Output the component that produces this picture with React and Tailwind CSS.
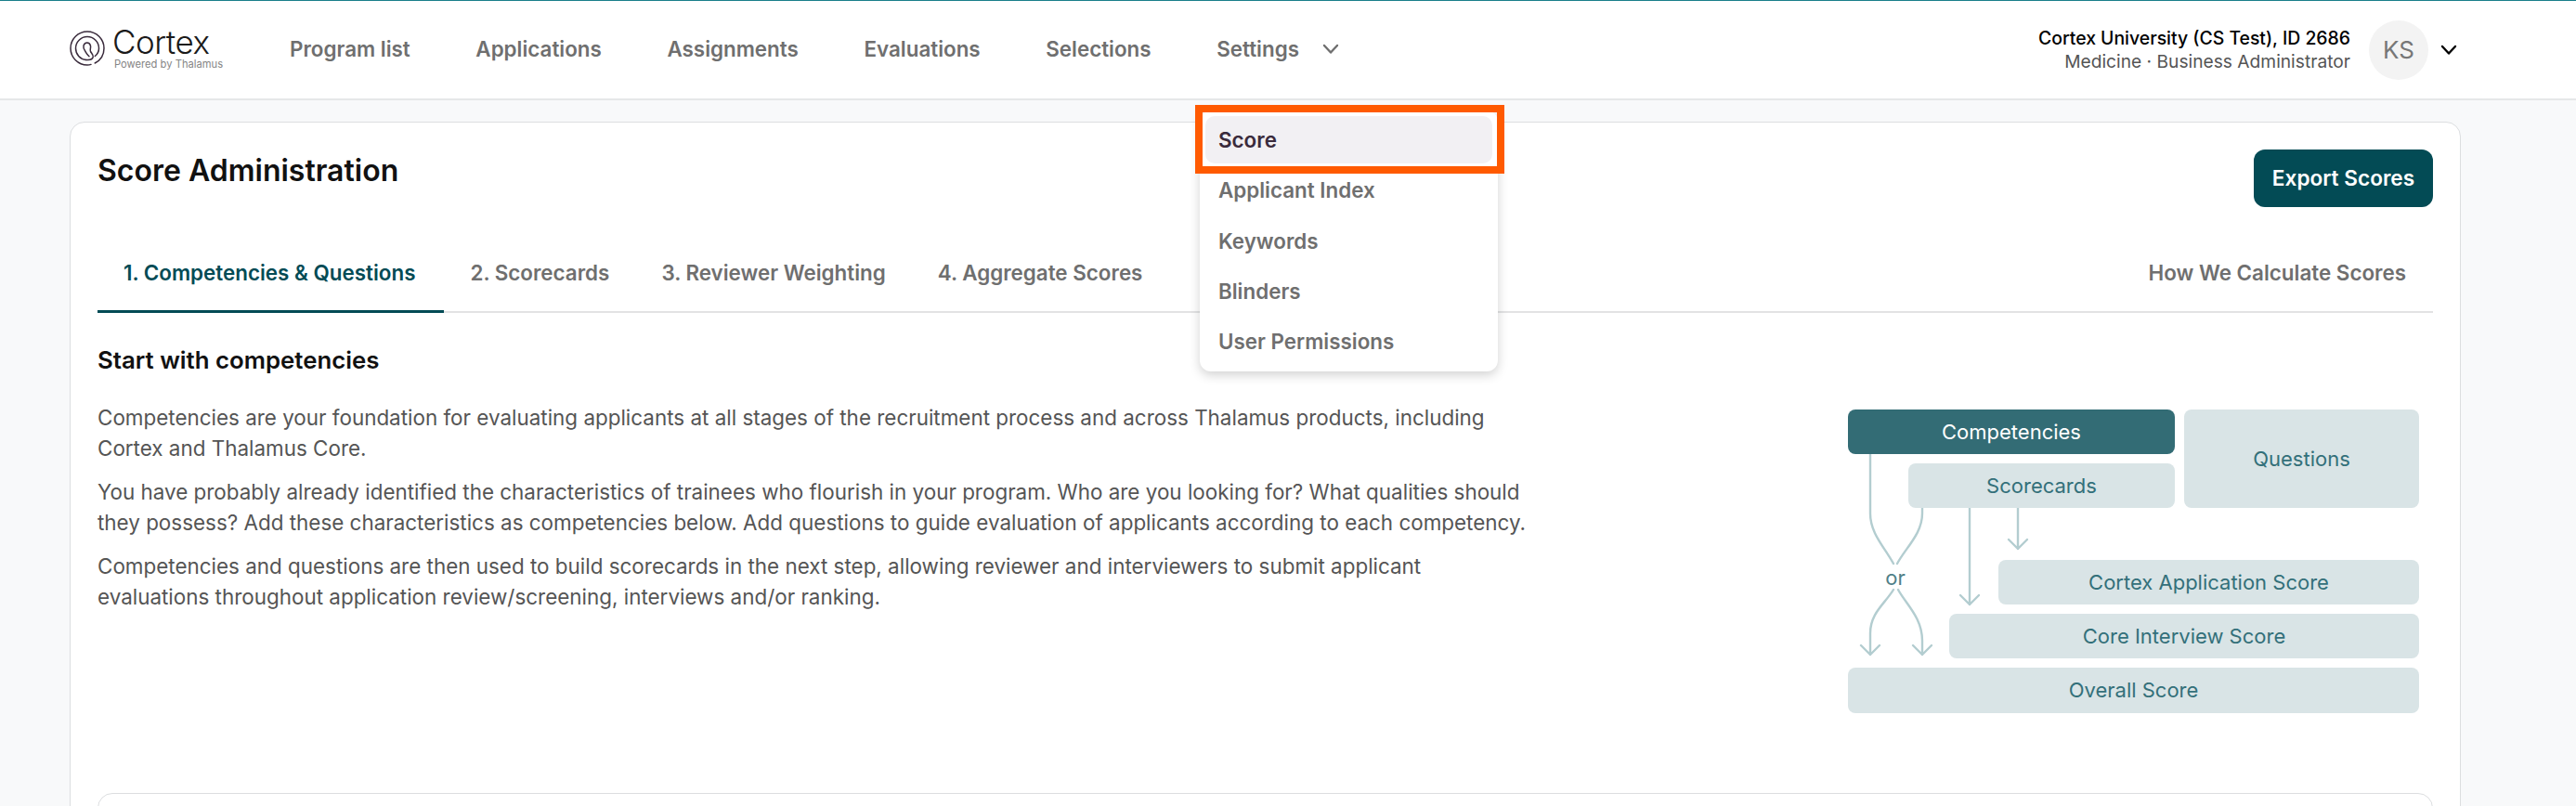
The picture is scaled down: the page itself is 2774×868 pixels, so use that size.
import React from 'react';

const navItems = ['Program list', 'Applications', 'Assignments', 'Evaluations', 'Selections'];
const tabs = ['2. Scorecards', '3. Reviewer Weighting', '4. Aggregate Scores'];
const menuItems = ['Applicant Index', 'Keywords', 'Blinders', 'User Permissions'];

const Chevron = ({ className }) => (
  <svg className={className} viewBox="0 0 18 12" fill="none" stroke="currentColor" strokeWidth="2.4" strokeLinecap="round" strokeLinejoin="round">
    <path d="M2 2l7 7.5L16 2" />
  </svg>
);

const Logo = () => (
  <svg className="w-[38px] h-[38px] shrink-0" viewBox="0 0 38 38" fill="none" stroke="#3a2b3c" strokeWidth="1.5" strokeLinecap="round">
    <path d="M23 36.4C21.8 36.8 20.4 37 19 37C9.1 37 1 28.9 1 19S9.1 1 19 1s18 8.1 18 18c0 7-4 13-9.800 16" />
    <path d="M27.300 27.500C30 25.300 31.500 22.300 31.500 19c0-6.900-5.600-12.500-12.500-12.500S6.500 12.100 6.500 19c0 6.500 4.800 11.800 11.200 12.400" />
    <path d="M17.700 31.400C21 31.800 24.500 31 25.200 28.500C25.800 26.300 23.700 24.500 22.500 22.500C21.500 20.800 23 18.500 22.500 16.300C22 14 20.400 13 18.800 13C17 13 15.500 14.300 15 16.300C14.400 18.800 15.800 20.500 17 22.500C18.200 24.500 19 26 21 27.800" />
  </svg>
);

const Box = ({ x, y, w, h, label, dark }) => (
  <g>
    <rect x={x} y={y} width={w} height={h} rx="8" fill={dark ? '#336c75' : '#d9e4e6'} />
    <text x={x + w / 2} y={y + h / 2 + 7.5} textAnchor="middle" fontSize="22" fill={dark ? '#ffffff' : '#33707a'}>
      {label}
    </text>
  </g>
);

const Diagram = () => (
  <svg className="w-[617px] h-[330px] shrink-0 mt-[104px] mr-[13px]" viewBox="1990 441 617 330" fill="none">
    <g stroke="#b3cdd0" strokeWidth="2.4" strokeLinecap="round" strokeLinejoin="round">
      <path d="M2014 489V553C2014 575 2030 590 2039 607" />
      <path d="M2070 547V553C2070 575 2052 590 2043 607" />
      <path d="M2039 635C2030 650 2014 660 2014 682V705M2004 695L2014 705L2024 695" />
      <path d="M2044 635C2052 650 2070 665 2070 690V705M2060 695L2070 705L2080 695" />
      <path d="M2121 547V651M2111 641L2121 651L2131 641" />
      <path d="M2173 547V591M2163 581L2173 591L2183 581" />
    </g>
    <Box x={1990} y={441} w={352} h={48} label="Competencies" dark />
    <Box x={2055} y={499} w={287} h={48} label="Scorecards" />
    <Box x={2352} y={441} w={253} h={106} label="Questions" />
    <Box x={2152} y={603} w={453} h={48} label="Cortex Application Score" />
    <Box x={2099} y={661} w={506} h={48} label="Core Interview Score" />
    <Box x={1990} y={719} w={615} h={49} label="Overall Score" />
    <text x="2041" y="630" textAnchor="middle" fontSize="22" fill="#4f8088">or</text>
  </svg>
);

const SettingsMenu = () => (
  <div className="absolute top-[119px] left-[1292px] w-[321px] h-[281px] bg-white rounded-[12px] shadow-[0_4px_12px_rgba(0,0,0,0.18)] pt-[6px] px-[6px] z-10">
    <div className="h-[51px] rounded-[10px] bg-[#f2f0f3] flex items-center pl-[14px] pt-[1px] text-[22.400px] font-semibold text-[#3a2b3c]">Score</div>
    {menuItems.map((item) => (
      <div key={item} className="h-[54.300px] flex items-center pl-[14px] text-[22.400px] font-semibold text-[#6f6f6f] translate-y-[2px]">
        {item}
      </div>
    ))}
  </div>
);

export default function App() {
  return (
    <div className="relative h-[868px] overflow-hidden bg-[#f8f9fa] font-['Inter',sans-serif]">
      <header className="h-[108px] bg-white border-t-[1px] border-b-[2px] border-t-[#1a7f8a] border-b-[#e6e7e8] flex items-center pl-[75px] pr-[128px]">
        <div className="flex items-center gap-[8px] w-[237px] -mt-[3px]">
          <Logo />
          <div className="flex flex-col">
            <span className="text-[35px] leading-[34px] font-light tracking-[-0.5px] text-[#1a1a1a]">Cortex</span>
            <span className="text-[11.200px] leading-[14px] pl-[2px] text-[#858585]">Powered by Thalamus</span>
          </div>
        </div>
        <nav className="flex items-center gap-[70.600px] text-[22.400px] font-semibold text-[#6f6f6f] -mt-[1px]">
          {navItems.map((item) => (
            <span key={item}>{item}</span>
          ))}
          <span className="flex items-center gap-[25px]">
            Settings
            <Chevron className="w-[18px] h-[12px]" />
          </span>
        </nav>
        <div className="ml-auto flex items-center">
          <div className="text-right leading-[25px]">
            <div className="text-[19.400px] font-medium text-black">Cortex University (CS Test), ID 2686</div>
            <div className="text-[19.200px] text-[#555555]">Medicine · Business Administrator</div>
          </div>
          <div className="ml-[20px] w-[64px] h-[64px] rounded-full bg-[#f3f3f3] flex items-center justify-center text-[26px] text-[#777777]">KS</div>
          <Chevron className="ml-[13px] w-[18px] h-[12px] text-black" />
        </div>
      </header>

      <SettingsMenu />
      <div className="absolute top-[113px] left-[1287px] w-[333px] h-[74px] border-[8px] border-[#ff5a00] z-20" />

      <main className="pl-[75px] pr-[124px] pt-[23px]">
        <div className="bg-white border border-[#dcdee0] rounded-[16px] px-[29px] pt-[28px] h-[800px]">
          <div className="flex items-start justify-between">
            <h1 className="text-[32px] leading-[48px] font-semibold text-[#111111]">Score Administration</h1>
            <button className="w-[193px] h-[62px] mt-[1px] rounded-[12px] bg-[#034b55] text-white text-[22.600px] font-semibold">Export Scores</button>
          </div>

          <div className="flex items-center border-b-2 border-[#e2e3e4] mt-[30px] h-[84px] text-[22.400px] font-semibold text-[#6f6f6f]">
            <div className="h-[84px] -mb-[2px] pl-[28px] pr-[31px] flex items-center border-b-[3px] border-[#034b55] text-[#034b55]">1. Competencies &amp; Questions</div>
            {tabs.map((tab) => (
              <div key={tab} className="px-[28px]">{tab}</div>
            ))}
            <div className="ml-auto pr-[29px]">How We Calculate Scores</div>
          </div>

          <div className="flex justify-between">
            <div className="w-[1540px]">
              <h2 className="mt-[34px] text-[25.800px] leading-[34px] font-semibold text-[#111111]">Start with competencies</h2>
              <div className="mt-[28px] flex flex-col gap-[14px] text-[22.430px] leading-[33px] text-[#555555]">
                <p>Competencies are your foundation for evaluating applicants at all stages of the recruitment process and across Thalamus products, including Cortex and Thalamus Core.</p>
                <p>You have probably already identified the characteristics of trainees who flourish in your program. Who are you looking for? What qualities should they possess? Add these characteristics as competencies below. Add questions to guide evaluation of applicants according to each competency.</p>
                <p>Competencies and questions are then used to build scorecards in the next step, allowing reviewer and interviewers to submit applicant evaluations throughout application review/screening, interviews and/or ranking.</p>
              </div>
            </div>
            <Diagram />
          </div>

          <div className="mt-[83px] h-[200px] border border-[#dcdee0] rounded-[16px]" />
        </div>
      </main>
    </div>
  );
}
